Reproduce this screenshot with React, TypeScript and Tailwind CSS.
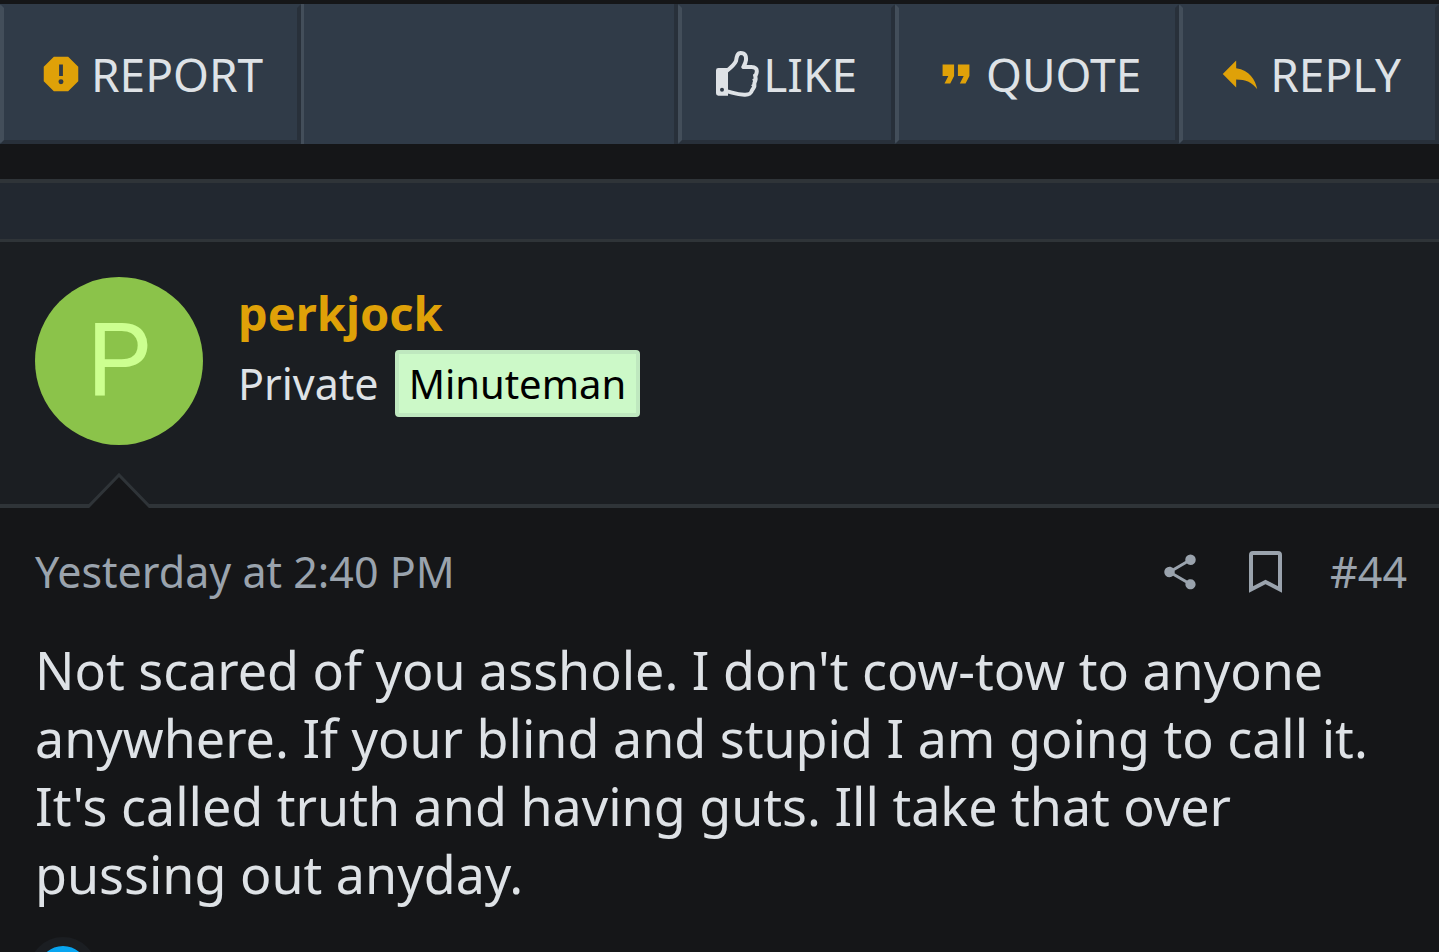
import { ReactNode } from 'react';

interface IconProps {
  path: string;
  className?: string;
}

function Icon({ path, className }: IconProps) {
  return (
    <svg viewBox="0 0 24 24" fill="currentColor" aria-hidden="true" className={className}>
      <path d={path} />
    </svg>
  );
}

const icons = {
  report:
    'M13,13H11V7H13M12,17.3A1.3,1.3 0 0,1 10.7,16A1.3,1.3 0 0,1 12,14.7A1.3,1.3 0 0,1 13.3,16A1.3,1.3 0 0,1 12,17.3M15.73,3H8.27L3,8.27V15.73L8.27,21H15.73L21,15.73V8.27L15.73,3Z',
  quote: 'M14,17H17L19,13V7H13V13H16M6,17H9L11,13V7H5V13H8L6,17Z',
  reply: 'M10,9V5L3,12L10,19V14.9C15,14.9 18.5,16.5 21,20C20,15 17,10 10,9Z',
  share:
    'M18,16.08C17.24,16.08 16.56,16.38 16.04,16.85L8.91,12.7C8.96,12.47 9,12.24 9,12C9,11.76 8.96,11.53 8.91,11.3L15.96,7.19C16.5,7.69 17.21,8 18,8A3,3 0 0,0 21,5A3,3 0 0,0 18,2A3,3 0 0,0 15,5C15,5.24 15.04,5.47 15.09,5.7L8.04,9.81C7.5,9.31 6.79,9 6,9A3,3 0 0,0 3,12A3,3 0 0,0 6,15C6.79,15 7.5,14.69 8.04,14.19L15.16,18.34C15.11,18.55 15.08,18.77 15.08,19C15.08,20.61 16.39,21.91 18,21.91C19.61,21.91 20.92,20.61 20.92,19A2.92,2.92 0 0,0 18,16.08Z',
};

function ThumbIcon() {
  return (
    <svg viewBox="0 0 129 138" aria-hidden="true" className="mr-1 h-[46px] w-[43px] shrink-0">
      <path
        fill="currentColor"
        fillRule="evenodd"
        d="M7 51H36V134H7Q0 134 0 127V58Q0 51 7 51ZM18 110a6 6 0 1 0 0 12a6 6 0 1 0 0-12Z"
      />
      <path
        fill="none"
        stroke="currentColor"
        strokeWidth="12"
        strokeLinejoin="round"
        d="M32 60C42 52 56 40 60 30C62 16 64 6 74 6C88 6 91 16 90 27C89 36 86 41 82 48H106C118 48 124 54 122 64C121 70 119 72 118 76L119 84C118 92 115 94 115 98L115 106C113 112 110 114 108 118C104 130 98 131 88 131C66 132 54 126 34 121"
      />
      <path
        fill="none"
        stroke="currentColor"
        strokeWidth="6"
        strokeLinecap="round"
        d="M114 72L119 78M112 86L117 92M109 103L114 108"
      />
    </svg>
  );
}

function ActionButton({ label, children }: { label: string; children: ReactNode }) {
  return (
    <button
      type="button"
      className="flex shrink-0 items-center rounded-xs border-4 border-t-[#303b48] border-r-[#28303a] border-b-[#28303a] border-l-[#434e5a] px-[34px] text-[46px] uppercase"
    >
      {children}
      {label}
    </button>
  );
}

export default function App() {
  return (
    <div className="min-h-screen overflow-x-hidden bg-[#151618] font-['Noto_Sans',sans-serif] text-[#dee2e6]">
      {/* Action bar of the previous post */}
      <div className="mt-1 flex h-[140px] overflow-hidden bg-[#303b48]">
        <ActionButton label="Report">
          <Icon path={icons.report} className="mr-[7px] size-[46px] text-[#dfa108]" />
        </ActionButton>
        <div className="flex-1 border-r-4 border-l-3 border-r-[#28303a] border-l-[#434e5a]" />
        <ActionButton label="Like">
          <ThumbIcon />
        </ActionButton>
        <ActionButton label="Quote">
          <Icon path={icons.quote} className="mr-[7px] size-[46px] text-[#dfa108]" />
        </ActionButton>
        <ActionButton label="Reply">
          <Icon path={icons.reply} className="mr-[7px] size-[46px] text-[#dfa108]" />
        </ActionButton>
      </div>

      <article className="mt-[35px] border-t-4 border-[#2f3438]">
        <div className="h-[59px] border-b-3 border-[#2f3438] bg-[#222830]" />

        {/* Author */}
        <header className="relative flex h-[266px] gap-[35px] border-b-4 border-[#2f3438] bg-[#1b1e22] p-[35px]">
          <a
            href="#perkjock"
            aria-label="perkjock profile"
            className="flex size-[168px] shrink-0 items-center justify-center rounded-full bg-[#8bc34a] font-['Roboto',sans-serif] text-[102px] leading-none text-[#ccff90]"
          >
            P
          </a>
          <div>
            <a href="#perkjock" className="block text-[47px] leading-[73px] font-bold text-[#dfa108]">
              perkjock
            </a>
            <div className="flex items-center gap-4 text-[43px] leading-[67px]">
              <span>Private</span>
              <span className="rounded border-4 border-[#bfe8bf] bg-[#ccf9c8] px-[10px] text-[40px] leading-[59px] text-black">
                Minuteman
              </span>
            </div>
          </div>
          <svg viewBox="0 0 68 35" aria-hidden="true" className="absolute -bottom-1 left-[85px] h-[35px] w-[68px]">
            <path d="M3 35L34 3L65 35Z" fill="#151618" />
            <path d="M2 35L34 2L66 35" fill="none" stroke="#2f3438" strokeWidth="3" />
          </svg>
        </header>

        <div className="pt-8 pr-8 pl-[35px]">
          <div className="flex items-center justify-between text-[43px] leading-[64px] text-[#9aa3ad]">
            <a href="#post-44">
              <time>Yesterday at 2:40 PM</time>
            </a>
            <div className="flex items-center">
              <button type="button" aria-label="Share">
                <Icon path={icons.share} className="size-[42px]" />
              </button>
              <button type="button" aria-label="Add bookmark" className="ml-12">
                <svg viewBox="0 0 33 42" fill="none" stroke="currentColor" strokeWidth="4" aria-hidden="true" className="h-[42px] w-[33px]">
                  <path d="M2 38.5V4a2 2 0 0 1 2-2h25a2 2 0 0 1 2 2v34.5L16.5 31z" />
                </svg>
              </button>
              <a href="#post-44" className="ml-12">
                #44
              </a>
            </div>
          </div>

          <p className="mt-8 text-[52px] leading-[68px]">
            Not scared of you asshole. I don't cow-tow to anyone anywhere. If your blind and stupid I am going to call
            it. It's called truth and having guts. Ill take that over pussing out anyday.
          </p>

          {/* Reactions, cut off by the fold */}
          <div className="mt-[29px] h-[15px] overflow-hidden">
            <div className="-ml-1.5 size-[68px] rounded-full border-9 border-[#1b1e22] bg-[#08a5f0]" />
          </div>
        </div>
      </article>
    </div>
  );
}
